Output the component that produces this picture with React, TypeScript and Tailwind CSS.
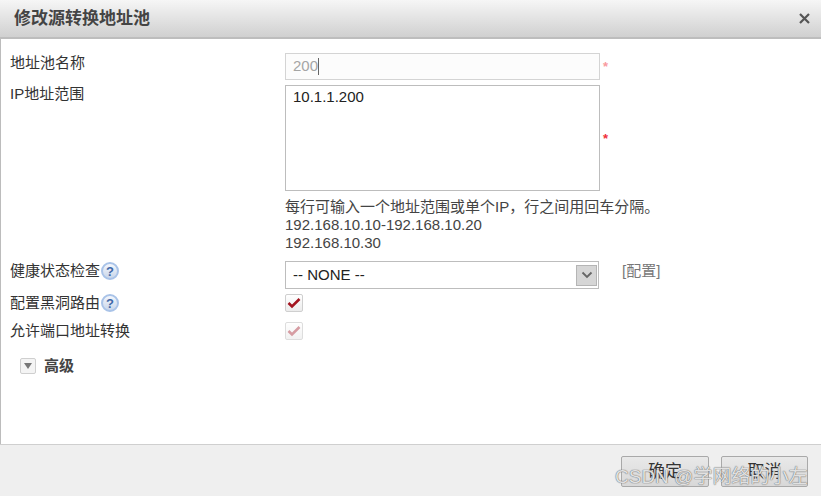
const font = "font-['Liberation_Sans','Noto_Sans_CJK_SC',sans-serif]";

function HelpIcon() {
  return (
    <span className="ml-px inline-flex h-[18px] w-[18px] items-center justify-center rounded-full border-2 border-[#a9c3e8] bg-gradient-to-b from-[#f4f7fc] to-[#c9d6ea] text-[13px] font-bold leading-none text-[#3f68a8]">
      ?
    </span>
  );
}

function Required({ faded }: { faded?: boolean }) {
  return (
    <span className={`ml-[3px] text-[13px] font-bold leading-none ${faded ? "text-[#f99aa0]" : "text-[#f0303a]"}`}>*</span>
  );
}

function Check({ faded }: { faded?: boolean }) {
  return (
    <span className={`flex h-[18px] w-[18px] items-center justify-center rounded-[2px] border border-[#cfcfcf] bg-gradient-to-b from-white to-[#ececec] ${faded ? "opacity-70" : ""}`}>
      <svg width="14" height="12" viewBox="0 0 14 12" fill="none">
        <path d="M1.5 6 L5 9.5 L12.5 2" stroke={faded ? "#c5737c" : "#a3141f"} strokeWidth="2.6" />
      </svg>
    </span>
  );
}

export default function App() {
  return (
    <div className={`relative flex h-[496px] w-[821px] flex-col overflow-hidden bg-white text-[15px] text-[#333] ${font}`}>
      <header className="flex h-[39px] shrink-0 items-center justify-between border-b-2 border-[#bdbdbd] bg-gradient-to-b from-[#f6f6f6] to-[#d0d0d0] pl-[14px] pr-[11px]">
        <h1 className="text-[17px] font-bold text-[#444]">修改源转换地址池</h1>
        <svg width="11" height="11" viewBox="0 0 11 11" fill="none">
          <path d="M1 1 L10 10 M10 1 L1 10" stroke="#555" strokeWidth="2.2" />
        </svg>
      </header>

      <main className="flex min-h-0 flex-1 flex-col border-l border-[#bcbcbc] pl-[9px] pt-[14px]">
        <div className="flex h-[27px]">
          <label className="w-[275px] pt-px leading-[18px]">地址池名称</label>
          <div className="flex h-[27px] w-[315px] items-center border border-[#d4d4d4] bg-[#fcfcfc] pl-[7px] text-[#a5a5a5]">
            200<span className="h-[17px] w-px bg-[#666]" />
          </div>
          <div className="flex items-center"><Required faded /></div>
        </div>

        <div className="mt-[5px] flex">
          <label className="w-[275px] leading-[18px]">IP地址范围</label>
          <div className="h-[106px] w-[315px] border border-[#bdbdbd] px-[7px] py-[2px] leading-[18px] text-[#222]">10.1.1.200</div>
          <div className="flex items-center"><Required /></div>
        </div>

        <div className="ml-[275px] mt-[7px] leading-[18px] text-[#444]">
          <p>每行可输入一个地址范围或单个IP，行之间用回车分隔。</p>
          <p>192.168.10.10-192.168.10.20</p>
          <p>192.168.10.30</p>
        </div>

        <div className="mt-[9px] flex h-[28px]">
          <label className="flex w-[275px] items-start pt-px leading-[18px]">健康状态检查<HelpIcon /></label>
          <div className="flex h-[28px] w-[314px] items-center justify-between border border-[#bdbdbd] pl-[7px] pr-[1px] text-[#222]">
            -- NONE --
            <span className="flex h-[21px] w-[21px] items-center justify-center border border-[#b5b5b5] bg-[#d6d6d6]">
              <svg width="12" height="8" viewBox="0 0 12 8" fill="none">
                <path d="M1.5 1.5 L6 6 L10.5 1.5" stroke="#666" strokeWidth="1.8" />
              </svg>
            </span>
          </div>
          <span className="ml-[23px] leading-[20px] text-[#777]">[配置]</span>
        </div>

        <div className="mt-[5px] flex h-[18px] items-center">
          <label className="flex w-[275px] items-center">配置黑洞路由<HelpIcon /></label>
          <Check />
        </div>

        <div className="mt-[10px] flex h-[18px] items-center">
          <label className="w-[275px]">允许端口地址转换</label>
          <Check faded />
        </div>

        <div className="ml-[10px] mt-[15px] flex items-center gap-[8px]">
          <span className="flex h-[16px] w-[16px] items-center justify-center rounded-[2px] border border-[#cfcfcf] bg-[#f4f4f4]">
            <svg width="10" height="6" viewBox="0 0 10 6"><path d="M1 0 H9 L5 6 Z" fill="#777" /></svg>
          </span>
          <span className="font-bold text-[#444]">高级</span>
        </div>
      </main>

      <footer className="flex h-[52px] shrink-0 items-start justify-end gap-[12px] border-t border-[#cfcfcf] bg-[#efefef] pr-[13px] pt-[11px]">
        <button className="h-[31px] w-[88px] rounded-[2px] border border-[#a9a9a9] bg-gradient-to-b from-[#e9e9e9] to-[#d8d8d8] text-[17px] text-[#333]">确定</button>
        <button className="h-[31px] w-[87px] rounded-[2px] border border-[#a9a9a9] bg-gradient-to-b from-[#e9e9e9] to-[#d8d8d8] text-[17px] text-[#333]">取消</button>
      </footer>

      <span className="absolute left-[615px] top-[465px] text-[19px] leading-[24px] text-white/80 [text-shadow:0_0_1px_#666,0_0_1px_#666]">
        CSDN @学网络的小左
      </span>
    </div>
  );
}
